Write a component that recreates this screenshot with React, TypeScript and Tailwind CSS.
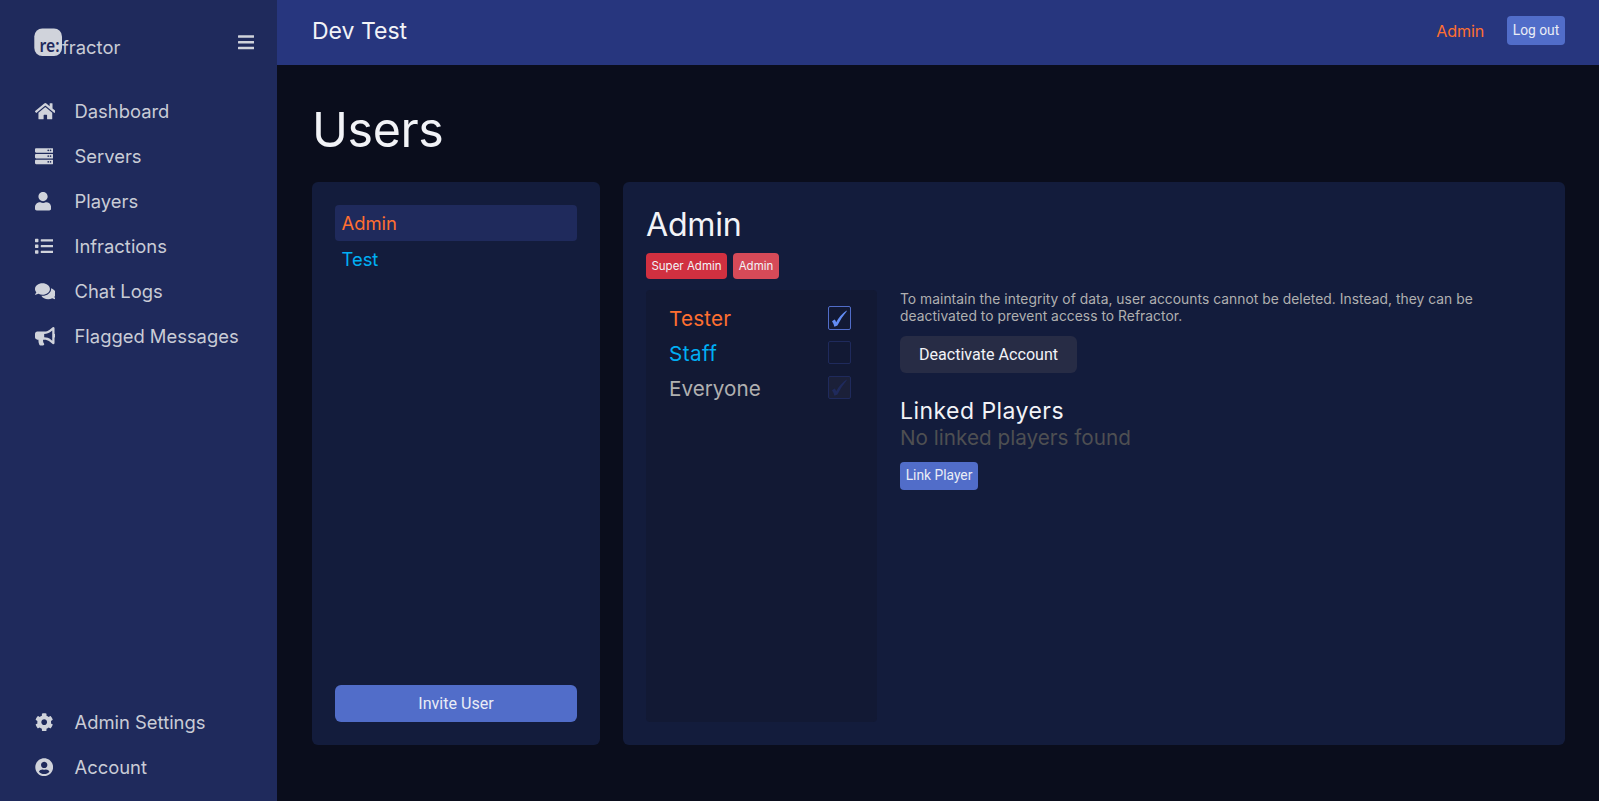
import type { ReactNode } from "react";
import type { IconType } from "react-icons";
import {
  FaBars,
  FaBullhorn,
  FaCog,
  FaComments,
  FaHome,
  FaList,
  FaServer,
  FaUser,
  FaUserCircle,
} from "react-icons/fa";

type NavEntry = { label: string; icon: IconType; iconClass: string };

const mainNav: NavEntry[] = [
  { label: "Dashboard", icon: FaHome, iconClass: "h-[18.4px] w-[20.7px]" },
  { label: "Servers", icon: FaServer, iconClass: "h-[18.4px] w-[18.4px]" },
  { label: "Players", icon: FaUser, iconClass: "h-[18.4px] w-[16.1px]" },
  { label: "Infractions", icon: FaList, iconClass: "h-[18.4px] w-[18.4px]" },
  { label: "Chat Logs", icon: FaComments, iconClass: "h-[18.4px] w-[20.7px]" },
  { label: "Flagged Messages", icon: FaBullhorn, iconClass: "h-[18.4px] w-[20.7px]" },
];

const bottomNav: NavEntry[] = [
  { label: "Admin Settings", icon: FaCog, iconClass: "h-[18.4px] w-[18.4px]" },
  { label: "Account", icon: FaUserCircle, iconClass: "h-[18.4px] w-[18.4px]" },
];

function NavItem({ label, icon: Icon, iconClass }: NavEntry) {
  return (
    <a className="flex h-[45px] items-center pl-[34.5px] text-[18.4px] text-[#c9ccd6]">
      <span className="flex w-[40px] items-center text-[#d0d3db]">
        <Icon className={iconClass} />
      </span>
      {label}
    </a>
  );
}

function Logo() {
  return (
    <svg viewBox="0 0 28 28" className="size-7">
      <rect x="0.3" y="0.4" width="27.7" height="27.6" rx="8" fill="#d0d3db" />
      <text
        x="5.6"
        y="24"
        textLength="20"
        lengthAdjust="spacingAndGlyphs"
        fill="#1f2a5c"
        className="font-['Noto_Sans',sans-serif] text-[17px] font-semibold"
      >
        re:
      </text>
    </svg>
  );
}

function Sidebar() {
  return (
    <aside className="flex w-[277px] shrink-0 flex-col bg-[#1f2a5c] pb-[11px]">
      <div className="flex h-[89px] items-start justify-between pl-[34px] pr-[23px] pt-7 text-[#d0d3db]">
        <div className="flex items-start">
          <Logo />
          <span className="pt-[8px] text-[18.4px] leading-[22px] text-[#c9ccd6]">fractor</span>
        </div>
        <FaBars className="mt-[5px] h-[18.4px] w-[16.1px]" />
      </div>
      <nav className="flex flex-col">
        {mainNav.map((n) => (
          <NavItem key={n.label} {...n} />
        ))}
      </nav>
      <nav className="mt-auto flex flex-col">
        {bottomNav.map((n) => (
          <NavItem key={n.label} {...n} />
        ))}
      </nav>
    </aside>
  );
}

function SmallButton({ children, className }: { children: ReactNode; className: string }) {
  return (
    <button
      className={`rounded-[4px] bg-[#516dc9] font-[Roboto,sans-serif] text-[13.8px] font-normal text-[#e9ecf6] ${className}`}
    >
      {children}
    </button>
  );
}

function Header() {
  return (
    <header className="flex h-[65px] items-start justify-between bg-[#27367e] pl-[35px] pr-[34px]">
      <div className="pt-4 text-[23px] leading-[30px]">Dev Test</div>
      <div className="flex items-start gap-[23px] pt-4">
        <span className="text-[16.1px] leading-[30px] tracking-[-0.15px] text-[#ff6f30]">Admin</span>
        <SmallButton className="h-[29px] w-[58px] pb-px">Log out</SmallButton>
      </div>
    </header>
  );
}

function UserList() {
  return (
    <section className="flex w-[288px] shrink-0 flex-col rounded-[6px] bg-[#131c3c] p-[23px]">
      <div className="h-9 rounded-[4px] bg-[#1f2a5c] pl-[6.5px] text-[18.4px] leading-[37px] text-[#ff6f30]">Admin</div>
      <div className="h-9 rounded-[4px] pl-[6.5px] text-[18.4px] leading-[37px] text-[#00aff4]">Test</div>
      <button className="mt-auto h-[37px] rounded-[6px] bg-[#516dc9] pt-px font-[Roboto,sans-serif] text-[16.1px] font-normal text-[#e9ecf6]">
        Invite User
      </button>
    </section>
  );
}

function Check({ state }: { state: "on" | "off" | "locked" }) {
  const tone = {
    on: "h-6 border-[#516dc9] text-[#628cf5]",
    off: "h-[23px] border-[#1f2a5c] text-transparent",
    locked: "h-[23px] border-[#1f2a5c] bg-[#1b2039] text-[#1f2a5c]",
  }[state];
  return (
    <span className={`flex w-[23px] items-center justify-center rounded-[2px] border ${tone}`}>
      <svg viewBox="0 0 23 23" className="size-[23px] shrink-0" fill="currentColor">
        <path d="M4 14.2 6.6 12.6Q7.5 13.4 8.2 15.3 12 8.2 18.6 3.6L18.8 4.2Q13.2 10.6 9.4 18.6L6.4 19.8Q5.6 16.4 4 14.2Z" />
      </svg>
    </span>
  );
}

function Role({ name, color, state }: { name: string; color: string; state: "on" | "off" | "locked" }) {
  return (
    <div className="flex h-[35px] items-start justify-between">
      <span className={`text-[20.7px] leading-[26px] ${color}`}>{name}</span>
      <Check state={state} />
    </div>
  );
}

function UserDetail() {
  return (
    <section className="flex grow flex-col rounded-[6px] bg-[#131c3c] p-[23px]">
      <h2 className="h-12 text-[32.2px] leading-[39px] tracking-[-0.3px]">Admin</h2>
      <div className="flex gap-1.5 text-[11.5px] leading-[26px]">
        <span className="w-[81px] rounded-[4px] bg-[#d13040] text-center">Super Admin</span>
        <span className="w-[46px] rounded-[4px] bg-[#d64a58] text-center">Admin</span>
      </div>
      <div className="mt-[11px] flex grow gap-[23px]">
        <div className="w-[231px] shrink-0 rounded-[4px] bg-[#121934] px-[23px] pt-4 pr-[26px]">
          <Role name="Tester" color="tracking-[0.2px] text-[#ff6f30]" state="on" />
          <Role name="Staff" color="tracking-[0.4px] text-[#00aff4]" state="off" />
          <Role name="Everyone" color="text-[#b0b0b0]" state="locked" />
        </div>
        <div className="flex grow flex-col items-start pt-px">
          <p className="text-[13.8px] leading-[17px] tracking-[0.045px] text-[#b0b0b0]">
            To maintain the integrity of data, user accounts cannot be deleted. Instead, they can be
            <br />
            deactivated to prevent access to Refractor.
          </p>
          <button className="mt-[11px] h-[37px] w-[177px] rounded-[6px] bg-[#272c45] pt-px font-[Roboto,sans-serif] text-[16.1px] font-normal text-[#f2f3f7]">
            Deactivate Account
          </button>
          <h3 className="mt-6 text-[23px] leading-7 tracking-[0.45px]">Linked Players</h3>
          <div className="mb-[11px] text-[20.7px] leading-[26px] text-[#4e4f52]">No linked players found</div>
          <SmallButton className="h-7 w-[78px] pb-px">Link Player</SmallButton>
        </div>
      </div>
    </section>
  );
}

export default function App() {
  return (
    <div className="flex h-[801px] w-[1599px] overflow-hidden bg-[#0a0d1c] font-[Inter,sans-serif] font-normal text-[#f2f3f7]">
      <Sidebar />
      <div className="flex grow flex-col">
        <Header />
        <main className="flex grow flex-col pb-14 pl-[35px] pr-[34px] pt-[35px]">
          <h1 className="h-[82px] text-[48.3px] leading-[60px] tracking-[-0.4px]">Users</h1>
          <div className="flex grow gap-[23px]">
            <UserList />
            <UserDetail />
          </div>
        </main>
      </div>
    </div>
  );
}
